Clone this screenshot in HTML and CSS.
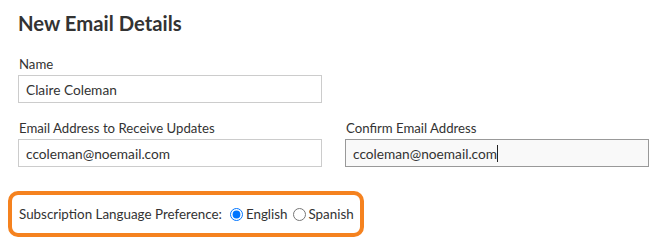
FILE: index.html
```html
<!DOCTYPE html>
<html lang="en">
<head>
<meta charset="utf-8">
<title>New Email Details</title>
<link rel="stylesheet" href="styles.css">
</head>
<body>
<div class="page">
  <h2 class="title">New Email Details</h2>
  <div class="field field-name">
    <label class="label" for="name">Name</label>
    <input class="input" id="name" type="text" value="Claire Coleman">
  </div>
  <div class="row">
    <div class="field">
      <label class="label" for="email">Email Address to Receive Updates</label>
      <input class="input" id="email" type="text" value="ccoleman@noemail.com">
    </div>
    <div class="field">
      <label class="label" for="confirm">Confirm Email Address</label>
      <div class="input-wrap">
        <input class="input input-focus" id="confirm" type="text" value="ccoleman@noemail.com">
        <span class="caret"></span>
      </div>
    </div>
  </div>
  <div class="pref">
    <span class="pref-label">Subscription Language Preference:</span>
    <label class="opt"><input type="radio" name="lang" checked><span>English</span></label>
    <label class="opt"><input type="radio" name="lang"><span>Spanish</span></label>
  </div>
</div>
</body>
</html>
```
FILE: styles.css
```css
html, body {
  margin: 0;
  padding: 0;
  background: #ffffff;
}
body {
  font-family: Lato, "Liberation Sans", sans-serif;
  font-size: 13.2px;
  color: #333333;
}
.page {
  padding: 8px 11px 0 8px;
}
.title {
  margin: 0 0 0 10px;
  font-size: 20.3px;
  font-weight: 700;
  line-height: 30px;
  color: #333333;
}
.field {
  display: flex;
  flex-direction: column;
  width: 304px;
}
.field-name {
  margin: 17px 0 0 10px;
}
.label {
  line-height: 18px;
  margin-bottom: 2px;
  padding-left: 1px;
  white-space: nowrap;
}
.input-wrap {
  position: relative;
}
.input {
  box-sizing: border-box;
  width: 304px;
  height: 28px;
  margin: 0;
  padding: 0 7px;
  border: 1px solid #cccccc;
  border-radius: 0;
  font-family: inherit;
  font-size: 13.7px;
  color: #333333;
  background: #ffffff;
  outline: none;
}
.input-focus {
  border-color: #999999;
  background: #f9f9f9;
}
.caret {
  position: absolute;
  left: 152px;
  top: 6px;
  width: 1px;
  height: 17px;
  background: #222222;
}
.row {
  display: flex;
  gap: 23px;
  margin: 16px 0 0 10px;
}
.pref {
  display: inline-flex;
  align-items: center;
  box-sizing: border-box;
  width: 356px;
  height: 46px;
  margin-top: 24px;
  padding: 0 7px;
  border: 4px solid #f5821f;
  border-radius: 10px;
  white-space: nowrap;
  font-size: 13.4px;
}
.pref-label {
  margin-right: 3px;
}
.opt {
  display: inline-flex;
  align-items: center;
}
.opt input {
  width: 13px;
  height: 13px;
  margin: 0 3px 0 5px;
}
```
